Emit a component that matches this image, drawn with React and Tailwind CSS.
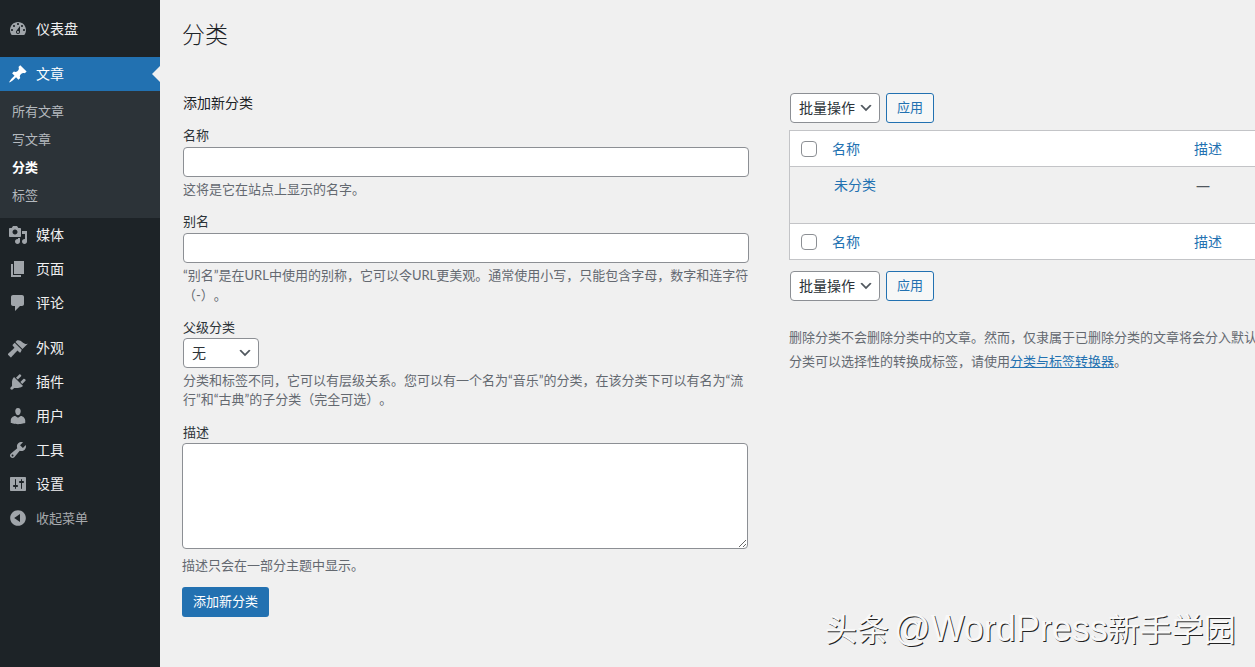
import React from 'react';

const ICONS = {
  dashboard: 'M3.76 16h12.48c1.1-1.37 1.76-3.11 1.76-5 0-4.42-3.58-8-8-8s-8 3.58-8 8c0 1.89.66 3.63 1.76 5zM10 4c.55 0 1 .45 1 1s-.45 1-1 1-1-.45-1-1 .45-1 1-1zM6 6c.55 0 1 .45 1 1s-.45 1-1 1-1-.45-1-1 .45-1 1-1zm8 0c.55 0 1 .45 1 1s-.45 1-1 1-1-.45-1-1 .45-1 1-1zm-5.37 5.55L12 7v6c0 1.1-.9 2-2 2s-2-.9-2-2c0-.57.24-1.08.63-1.45zM4 10c.55 0 1 .45 1 1s-.45 1-1 1-1-.45-1-1 .45-1 1-1zm12 0c.55 0 1 .45 1 1s-.45 1-1 1-1-.45-1-1 .45-1 1-1zm-5 3c0-.55-.45-1-1-1s-1 .45-1 1 .45 1 1 1 1-.45 1-1z',
  post: 'M10.44 3.02l1.82-1.82 6.36 6.35-1.83 1.82c-1.05-.68-2.48-.57-3.41.36l-.75.75c-.92.93-1.04 2.35-.35 3.41l-1.83 1.82-2.41-2.41-2.8 2.79c-.42.42-3.38 2.71-3.8 2.29s1.86-3.39 2.28-3.81l2.79-2.79L4.1 9.36l1.83-1.82c1.05.69 2.48.57 3.4-.36l.75-.75c.93-.92 1.05-2.35.36-3.41z',
  media: 'M13 11V4c0-.55-.45-1-1-1h-1.67L9 1H5L3.67 3H2c-.55 0-1 .45-1 1v7c0 .55.45 1 1 1h10c.55 0 1-.45 1-1zM7 4.5c1.38 0 2.5 1.12 2.5 2.5S8.38 9.5 7 9.5 4.5 8.38 4.5 7 5.62 4.5 7 4.5zM14 6h5v10.5c0 1.38-1.12 2.5-2.5 2.5S14 17.88 14 16.5s1.12-2.5 2.5-2.5c.17 0 .34.02.5.05V9h-3V6zm-4 8.05V13h2v3.5c0 1.38-1.12 2.5-2.5 2.5S7 17.88 7 16.5 8.12 14 9.5 14c.17 0 .34.02.5.05z',
  page: 'M6 15V2h10v13H6zm-1 1h8v2H3V5h2v11z',
  comments: 'M5 2h9c1.1 0 2 .9 2 2v7c0 1.1-.9 2-2 2h-2l-5 5v-5H5c-1.1 0-2-.9-2-2V4c0-1.1.9-2 2-2z',
  appearance: 'M14.48 11.06L7.41 3.99l1.5-1.5c.5-.56 2.3-.47 3.51.32 1.21.8 1.43 1.28 2.91 2.1 1.18.64 2.45 1.26 4.45.85zm-.71.71L6.7 4.7 4.93 6.47c-.39.39-.39 1.02 0 1.41l1.06 1.06c.39.39.39 1.03 0 1.42-.6.6-6.4 5.98-6.4 5.98l3.22 3.22s5.38-5.8 5.98-6.4c.39-.39 1.03-.39 1.42 0l1.06 1.06c.39.39 1.02.39 1.41 0z',
  plugins: 'M13.11 4.36L9.87 7.6 8 5.73l3.24-3.24c.35-.34 1.05-.2 1.56.32.52.51.66 1.21.31 1.55zm-8 1.77l.91-1.12 9.01 9.01-1.19.84c-.71.71-2.63 1.16-3.82 1.16H6.14L4.9 17.26c-.59.59-1.54.59-2.12 0-.59-.58-.59-1.53 0-2.12l1.24-1.24v-3.88c0-1.13.4-3.19 1.09-3.89zm7.26 3.97l3.24-3.24c.34-.35 1.04-.21 1.55.31.52.51.66 1.21.31 1.55l-3.24 3.25z',
  users: 'M10 9.25c-2.27 0-2.73-3.44-2.73-3.44C7 4.02 7.82 2 9.97 2c2.16 0 2.98 2.02 2.71 3.81 0 0-.41 3.44-2.68 3.44zm0 2.57L12.72 10c2.39 0 4.52 2.33 4.52 4.53v2.49s-3.65 1.13-7.24 1.13c-3.65 0-7.24-1.13-7.24-1.13v-2.49c0-2.25 1.94-4.48 4.47-4.48z',
  tools: 'M16.68 9.77c-1.34 1.34-3.3 1.67-4.95.99l-5.41 6.52c-.99.99-2.59.99-3.58 0s-.99-2.59 0-3.57l6.52-5.42c-.68-1.65-.35-3.61.99-4.95 1.28-1.28 3.12-1.62 4.72-1.06l-2.89 2.89 2.82 2.82 2.86-2.87c.53 1.58.18 3.39-1.08 4.65zM3.81 16.21c.4.39 1.04.39 1.43 0 .4-.4.4-1.04 0-1.43-.39-.4-1.03-.4-1.43 0-.39.39-.39 1.03 0 1.43z',
  settings: 'M18 16V4c0-.55-.45-1-1-1H3c-.55 0-1 .45-1 1v12c0 .55.45 1 1 1h14c.55 0 1-.45 1-1zM8 11h1c.55 0 1 .45 1 1s-.45 1-1 1H8v1.5c0 .28-.22.5-.5.5s-.5-.22-.5-.5V13H6c-.55 0-1-.45-1-1s.45-1 1-1h1V5.5c0-.28.22-.5.5-.5s.5.22.5.5V11zm5-2h-1c-.55 0-1-.45-1-1s.45-1 1-1h1V5.5c0-.28.22-.5.5-.5s.5.22.5.5V7h1c.55 0 1 .45 1 1s-.45 1-1 1h-1v5.5c0 .28-.22.5-.5.5s-.5-.22-.5-.5V9z',
  collapse: 'M10 2.16c4.33 0 7.84 3.51 7.84 7.84s-3.51 7.84-7.84 7.84S2.16 14.33 2.16 10 5.71 2.16 10 2.16zm2 11.72V6.12L6.18 9.97z',
};

function Dashicon({ name, className }) {
  return (
    <svg viewBox="0 0 20 20" fill="currentColor" fillRule="evenodd" className={className}>
      <path d={ICONS[name]} />
    </svg>
  );
}

function Chevron() {
  return (
    <svg viewBox="0 0 20 20" fill="currentColor" className="pointer-events-none absolute right-[6px] top-[7px] h-4 w-4 text-[#50575e]">
      <path d="M5 6l5 5 5-5 2 1-7 7-7-7z" />
    </svg>
  );
}

function MenuItem({ icon, label, muted }) {
  return (
    <div className={`flex h-[34px] items-center text-sm ${muted ? 'text-[#a7aaad]' : 'text-[#f0f0f1]'}`}>
      <Dashicon name={icon} className="ml-[8px] mr-[8px] h-5 w-5 text-[#a0a5aa]" />
      <span className={muted ? 'text-[13px]' : ''}>{label}</span>
    </div>
  );
}

function BulkBar() {
  return (
    <div className="flex gap-[6px]">
      <div className="relative">
        <select className="h-[30px] w-[90px] appearance-none rounded-[4px] border border-[#8c8f94] bg-white pl-[8px] text-sm text-[#2c3338]">
          <option>批量操作</option>
        </select>
        <Chevron />
      </div>
      <button className="h-[30px] w-[48px] rounded-[3px] border border-[#2271b1] bg-[#f6f7f7] text-[13px] text-[#2271b1]">应用</button>
    </div>
  );
}

function TableHead({ border }) {
  return (
    <div className={`flex h-[36px] items-center bg-white text-sm text-[#2271b1] ${border}`}>
      <input type="checkbox" className="ml-[11px] h-4 w-4 appearance-none rounded-[4px] border border-[#8c8f94] bg-white" />
      <span className="ml-[15px] w-[362px]">名称</span>
      <span>描述</span>
    </div>
  );
}

function Help({ children, className = '' }) {
  return <p className={`text-[13px] text-[#646970] [text-spacing-trim:space-all] ${className}`}>{children}</p>;
}

function Label({ children, className = '' }) {
  return <label className={`block text-[13px] leading-5 text-[#2c3338] ${className}`}>{children}</label>;
}

export default function App() {
  return (
    <div className="relative flex h-screen w-full overflow-hidden bg-[#f0f0f0] font-['Lato','Noto_Sans_CJK_SC',sans-serif]">
      <aside className="w-[160px] shrink-0 bg-[#1d2327] pt-[12px]">
        <MenuItem icon="dashboard" label="仪表盘" />
        <div className="relative mt-[11px] flex h-[34px] items-center bg-[#2271b1] text-sm text-white">
          <Dashicon name="post" className="ml-[8px] mr-[8px] h-5 w-5 text-white" />
          <span>文章</span>
          <span className="absolute right-0 top-[9px] h-0 w-0 border-y-[8px] border-r-[8px] border-y-transparent border-r-[#f0f0f0]" />
        </div>
        <div className="bg-[#2c3338] pb-[8px] pt-[7px] text-[13px] text-[#b4b9be]">
          <div className="flex h-[28px] items-center pl-[12px]">所有文章</div>
          <div className="flex h-[28px] items-center pl-[12px]">写文章</div>
          <div className="flex h-[28px] items-center pl-[12px] font-semibold text-white">分类</div>
          <div className="flex h-[28px] items-center pl-[12px]">标签</div>
        </div>
        <MenuItem icon="media" label="媒体" />
        <MenuItem icon="page" label="页面" />
        <MenuItem icon="comments" label="评论" />
        <div className="h-[11px]" />
        <MenuItem icon="appearance" label="外观" />
        <MenuItem icon="plugins" label="插件" />
        <MenuItem icon="users" label="用户" />
        <MenuItem icon="tools" label="工具" />
        <MenuItem icon="settings" label="设置" />
        <MenuItem icon="collapse" label="收起菜单" muted />
      </aside>

      <main className="min-w-0 flex-1 pl-[22px]">
        <h1 className="pt-[18px] text-[23px] font-light leading-[32px] text-[#1d2327]">分类</h1>

        <div className="mt-[43px] flex">
          <div className="w-[567px] shrink-0">
            <h2 className="pl-px text-sm font-normal leading-5 text-[#1d2327]">添加新分类</h2>

            <Label className="mt-[12px] pl-px">名称</Label>
            <input type="text" className="ml-px mt-[2px] block h-[30px] w-[566px] rounded-[4px] border border-[#8c8f94] bg-white" />
            <Help className="mt-[3px] pl-px leading-[19px]">这将是它在站点上显示的名字。</Help>

            <Label className="mt-[12px] pl-px">别名</Label>
            <input type="text" className="ml-px mt-[2px] block h-[30px] w-[566px] rounded-[4px] border border-[#8c8f94] bg-white" />
            <Help className="mt-[2px] pl-px leading-[20px]">
              “别名”是在URL中使用的别称，它可以令URL更美观。通常使用小写，只能包含字母，数字和连字符（-）。
            </Help>

            <Label className="mt-[12px] pl-px">父级分类</Label>
            <div className="relative ml-px mt-px w-[76px]">
              <select className="h-[30px] w-[76px] appearance-none rounded-[4px] border border-[#8c8f94] bg-white pl-[8px] text-sm text-[#2c3338]">
                <option>无</option>
              </select>
              <Chevron />
            </div>
            <Help className="mt-[3px] pl-px leading-[19px]">
              分类和标签不同，它可以有层级关系。您可以有一个名为“音乐”的分类，在该分类下可以有名为“流行”和“古典”的子分类（完全可选）。
            </Help>

            <Label className="mt-[13px] pl-px">描述</Label>
            <textarea className="mt-px block h-[106px] w-[566px] rounded-[4px] border border-[#8c8f94] bg-white" />
            <Help className="mt-[7px] leading-[19px]">描述只会在一部分主题中显示。</Help>

            <button className="mt-[12px] h-[30px] w-[87px] rounded-[3px] bg-[#2271b1] text-[13px] text-white">添加新分类</button>
          </div>

          <div className="ml-[40px] w-[700px] shrink-0">
            <div className="pl-px">
              <BulkBar />
            </div>
            <div className="mt-[7px] border border-[#c3c4c7]">
              <TableHead border="border-b border-[#c3c4c7]" />
              <div className="flex h-[56px] text-sm">
                <a className="ml-[44px] mt-[8px] w-[362px] leading-5 text-[#2271b1]">未分类</a>
                <span className="mt-[9px] font-['Open_Sans'] leading-5 text-[#50575e]">—</span>
              </div>
              <TableHead border="border-t border-[#c3c4c7]" />
            </div>
            <div className="mt-[11px] pl-px">
              <BulkBar />
            </div>
            <div className="mt-[24px] whitespace-nowrap text-[13px] leading-[24px] text-[#646970]">
              <p>删除分类不会删除分类中的文章。然而，仅隶属于已删除分类的文章将会分入默认分类。默认分类不能被删除。</p>
              <p>
                分类可以选择性的转换成标签，请使用<a className="text-[#2271b1] underline">分类与标签转换器</a>。
              </p>
            </div>
          </div>
        </div>
      </main>

      <div className="pointer-events-none absolute bottom-[17px] left-[825px] whitespace-nowrap font-['Liberation_Sans','Noto_Sans_CJK_SC',sans-serif] text-[32px] leading-[40px] text-[#f8f8f8] [word-spacing:-4px] [text-shadow:1px_1px_0_#222]">
        头条 <span className="text-[36px]">@WordPress</span>新手学园
      </div>
    </div>
  );
}
